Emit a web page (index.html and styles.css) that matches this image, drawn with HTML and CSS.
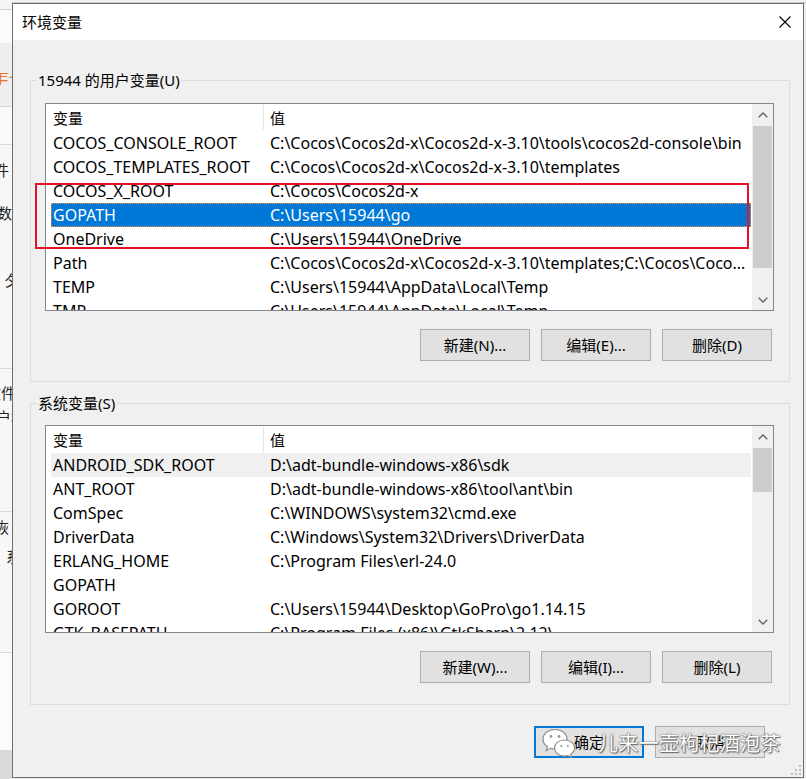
FILE: index.html
```html
<!DOCTYPE html>
<html lang="zh-CN">
<head>
<meta charset="utf-8">
<title>环境变量</title>
<link rel="stylesheet" href="styles.css">
</head>
<body>
<div class="desk">
  <div class="behind">
    <div class="bh bh-a"></div>
    <div class="bh bh-b"></div>
    <div class="bh bh-c"><span class="orange">乍一</span></div>
    <div class="bh bh-d"></div>
    <div class="bh bh-e"><span class="g g1">件</span><span class="g g2">数</span><span class="g g3">夕</span></div>
    <div class="bh bh-f"><span class="g g4">文件</span><span class="g g5">户村</span></div>
    <div class="bh bh-g"><span class="g g6">恢</span><span class="g g7">系</span></div>
    <div class="bh bh-h"></div>
    <div class="bh bh-i"></div>
  </div>

  <div class="dialog">
    <div class="titlebar">
      <span class="title">环境变量</span>
      <svg class="close" width="12" height="12" viewBox="0 0 12 12"><path d="M0.5 0.5 L11.5 11.5 M11.5 0.5 L0.5 11.5" stroke="#000" stroke-width="1.1" fill="none"/></svg>
    </div>
    <div class="body">
      <fieldset class="group g-user">
        <legend>15944 的用户变量(U)</legend>
        <div class="group-in">
          <div class="list">
            <div class="list-main">
              <div class="hdr"><span class="c1">变量</span><span class="c2">值</span></div>
              <div class="row"><span class="c1">COCOS_CONSOLE_ROOT</span><span class="c2">C:\Cocos\Cocos2d-x\Cocos2d-x-3.10\tools\cocos2d-console\bin</span></div>
              <div class="row"><span class="c1">COCOS_TEMPLATES_ROOT</span><span class="c2">C:\Cocos\Cocos2d-x\Cocos2d-x-3.10\templates</span></div>
              <div class="row"><span class="c1">COCOS_X_ROOT</span><span class="c2">C:\Cocos\Cocos2d-x</span></div>
              <div class="row selected"><span class="c1">GOPATH</span><span class="c2">C:\Users\15944\go</span></div>
              <div class="row"><span class="c1">OneDrive</span><span class="c2">C:\Users\15944\OneDrive</span></div>
              <div class="row"><span class="c1">Path</span><span class="c2">C:\Cocos\Cocos2d-x\Cocos2d-x-3.10\templates;C:\Cocos\Coco...</span></div>
              <div class="row"><span class="c1">TEMP</span><span class="c2">C:\Users\15944\AppData\Local\Temp</span></div>
              <div class="row"><span class="c1">TMP</span><span class="c2">C:\Users\15944\AppData\Local\Temp</span></div>
            </div>
            <div class="sb">
              <div class="arrow"><svg width="10" height="6" viewBox="0 0 10 6"><polyline points="0.7,5.3 5,1 9.3,5.3" stroke="#606060" stroke-width="1.3" fill="none"/></svg></div>
              <div class="track"><div class="thumb thumb-1"></div></div>
              <div class="arrow"><svg width="10" height="6" viewBox="0 0 10 6"><polyline points="0.7,0.7 5,5 9.3,0.7" stroke="#606060" stroke-width="1.3" fill="none"/></svg></div>
            </div>
          </div>
          <div class="btns">
            <button>新建(N)...</button>
            <button>编辑(E)...</button>
            <button>删除(D)</button>
          </div>
        </div>
      </fieldset>

      <fieldset class="group g-sys">
        <legend>系统变量(S)</legend>
        <div class="group-in">
          <div class="list">
            <div class="list-main">
              <div class="hdr"><span class="c1">变量</span><span class="c2">值</span></div>
              <div class="row hover"><span class="c1">ANDROID_SDK_ROOT</span><span class="c2">D:\adt-bundle-windows-x86\sdk</span></div>
              <div class="row"><span class="c1">ANT_ROOT</span><span class="c2">D:\adt-bundle-windows-x86\tool\ant\bin</span></div>
              <div class="row"><span class="c1">ComSpec</span><span class="c2">C:\WINDOWS\system32\cmd.exe</span></div>
              <div class="row"><span class="c1">DriverData</span><span class="c2">C:\Windows\System32\Drivers\DriverData</span></div>
              <div class="row"><span class="c1">ERLANG_HOME</span><span class="c2">C:\Program Files\erl-24.0</span></div>
              <div class="row"><span class="c1">GOPATH</span><span class="c2"></span></div>
              <div class="row"><span class="c1">GOROOT</span><span class="c2">C:\Users\15944\Desktop\GoPro\go1.14.15</span></div>
              <div class="row"><span class="c1">GTK_BASEPATH</span><span class="c2">C:\Program Files (x86)\GtkSharp\2.12\</span></div>
            </div>
            <div class="sb">
              <div class="arrow"><svg width="10" height="6" viewBox="0 0 10 6"><polyline points="0.7,5.3 5,1 9.3,5.3" stroke="#606060" stroke-width="1.3" fill="none"/></svg></div>
              <div class="track"><div class="thumb thumb-2"></div></div>
              <div class="arrow"><svg width="10" height="6" viewBox="0 0 10 6"><polyline points="0.7,0.7 5,5 9.3,0.7" stroke="#606060" stroke-width="1.3" fill="none"/></svg></div>
            </div>
          </div>
          <div class="btns">
            <button>新建(W)...</button>
            <button>编辑(I)...</button>
            <button>删除(L)</button>
          </div>
        </div>
      </fieldset>

      <div class="footer">
        <button class="ok">确定</button>
        <button>取消</button>
      </div>
    </div>
    <svg class="grip" width="12" height="12" viewBox="0 0 12 12">
      <rect x="9" y="1" width="2" height="2" fill="#bdbdbd"/>
      <rect x="5" y="5" width="2" height="2" fill="#bdbdbd"/>
      <rect x="9" y="5" width="2" height="2" fill="#bdbdbd"/>
      <rect x="1" y="9" width="2" height="2" fill="#bdbdbd"/>
      <rect x="5" y="9" width="2" height="2" fill="#bdbdbd"/>
      <rect x="9" y="9" width="2" height="2" fill="#bdbdbd"/>
    </svg>
  </div>
</div>

<div class="redbox"></div>

<div class="watermark">
  <svg class="wx" width="34" height="30" viewBox="0 0 34 30">
    <path d="M13 1.5 C5.8 1.5 1 6 1 11.2 C1 14.3 2.7 16.9 5.4 18.7 L4.2 22.6 L8.6 20.3 C10 20.7 11.5 21 13 21 C20.2 21 25 16.4 25 11.2 C25 6 20.2 1.5 13 1.5 Z" fill="#fff" stroke="#8e8e8e" stroke-width="1.2"/>
    <path d="M22.5 12 C16.6 12 12.5 15.7 12.5 20.1 C12.5 24.5 16.6 28.1 22.5 28.1 C23.7 28.1 24.8 27.9 25.8 27.6 L29.6 29.4 L28.6 26.2 C31.2 24.7 32.7 22.5 32.7 20.1 C32.7 15.7 28.4 12 22.5 12 Z" fill="#fff" stroke="#8e8e8e" stroke-width="1.2"/>
    <circle cx="9" cy="8.5" r="1.4" fill="#9a9a9a"/>
    <circle cx="17" cy="8.5" r="1.4" fill="#9a9a9a"/>
    <circle cx="19.3" cy="18" r="1.1" fill="#9a9a9a"/>
    <circle cx="25.8" cy="18" r="1.1" fill="#9a9a9a"/>
  </svg>
  <span class="wm-text">儿来一壶枸杞酒泡茶</span>
</div>
</body>
</html>
```

FILE: styles.css
```css
* { box-sizing: border-box; }

html, body {
  margin: 0;
  padding: 0;
}

body {
  position: relative;
  width: 806px;
  height: 779px;
  overflow: hidden;
  background: #ececec;
  font-family: "Noto Sans", "Noto Sans CJK SC", sans-serif;
  font-size: 15px;
  color: #000;
}

.desk {
  display: flex;
  align-items: flex-start;
  height: 779px;
  background: linear-gradient(#f2f2f2, #f2f2f2 2px, #c8c8c8 2px, #c8c8c8 3px, #ececec 3px);
}

/* window behind the dialog */
.behind {
  flex: none;
  width: 12px;
  height: 779px;
  display: flex;
  flex-direction: column;
  overflow: hidden;
  font-family: "Noto Sans CJK SC", sans-serif;
  font-size: 15px;
  line-height: 18px;
}
.bh { flex: none; position: relative; overflow: hidden; display: flex; flex-direction: column; }
.bh-a { height: 10px; background: #f4f4f4; border-bottom: 1px solid #d6d6d6; }
.bh-b { height: 33px; background: #fbfbfb; }
.bh-c { height: 64px; background: #efefef; padding-top: 25px; border-bottom: 1px solid #d6d6d6; }
.bh-d { height: 38px; background: #fafafa; border-bottom: 1px solid #d9d9d9; }
.bh-e { height: 224px; background: #f7f7f7; border-bottom: 1px solid #d9d9d9; }
.bh-f { height: 143px; background: #f7f7f7; border-bottom: 1px solid #d9d9d9; }
.bh-g { height: 141px; background: #f7f7f7; border-bottom: 1px solid #d9d9d9; }
.bh-h { height: 97px; background: #fbfbfb; }
.bh-i { flex: 1; background: #d9d9d9; }
.orange { color: #e2762b; margin-left: -6px; white-space: nowrap; }
.g { white-space: nowrap; color: #222; }
.g1 { margin-top: 16px; margin-left: -6px; }
.g2 { margin-top: 25px; margin-left: -3px; }
.g3 { margin-top: 49px; margin-left: 4px; }
.g4 { margin-top: 15px; margin-left: -14px; }
.g5 { margin-top: 6px; margin-left: -4px; }
.g6 { margin-top: 6px; margin-left: -6px; }
.g7 { margin-top: 11px; margin-left: 6px; }

/* dialog */
.dialog {
  flex: none;
  position: relative;
  width: 792px;
  height: 775px;
  margin-top: 3px;
  border: 1px solid #6e6e6e;
  background: #f0f0f0;
  display: flex;
  flex-direction: column;
}

.titlebar {
  flex: none;
  height: 36px;
  background: #fff;
  display: flex;
  align-items: center;
  justify-content: space-between;
  padding: 0 12px 0 9px;
}
.title {
  font-family: "Noto Sans CJK SC", sans-serif;
  font-size: 15px;
  line-height: 20px;
}
.close { display: block; }

.body {
  flex: 1;
  padding: 30px 13px 0 17px;
}

.group {
  margin: 0;
  padding: 0;
  min-width: 0;
  width: 760px;
  border: 1px solid #dcdcdc;
}
.group legend {
  margin-left: 6px;
  padding: 0 1px;
  height: 20px;
  line-height: 20px;
  font-size: 15px;
}
.group-in { padding: 13px 15px 20px 14px; }
.g-sys { margin-top: 11px; }
.g-sys .group-in { padding-top: 12px; padding-bottom: 21px; }

.list {
  height: 208px;
  border: 1px solid #828790;
  background: #fff;
  display: flex;
}
.list-main {
  flex: 1;
  min-width: 0;
  overflow: hidden;
  font-size: 16px;
}
.hdr {
  height: 27px;
  display: flex;
  align-items: stretch;
  line-height: 27px;
  font-family: "Noto Sans CJK SC", sans-serif;
  font-size: 15px;
}
.hdr .c1 {
  flex: none;
  width: 218px;
  padding-left: 7px;
  border-right: 1px solid #e5e5e5;
  margin: 1px 0 1px;
  line-height: 25px;
}
.hdr .c2 { padding-left: 6px; }

.row {
  height: 24px;
  line-height: 24px;
  margin: 0 1px 0 5px;
  display: flex;
  white-space: nowrap;
}
.row .c1 {
  flex: none;
  width: 212px;
  padding-left: 2px;
  overflow: hidden;
}
.row .c2 {
  flex: 1;
  min-width: 0;
  padding-left: 7px;
  overflow: hidden;
}
.row.selected {
  background: #0078d7;
  color: #fff;
  outline: 1px dotted #ff8a2a;
  outline-offset: -1px;
}
.row.hover { background: #f0f0f0; }

.sb {
  flex: none;
  width: 21px;
  background: #f0f0f0;
  display: flex;
  flex-direction: column;
}
.arrow {
  flex: none;
  height: 21px;
  display: flex;
  align-items: center;
  justify-content: center;
}
.arrow svg { display: block; }
.track { flex: 1; padding-top: 1px; }
.thumb { margin: 0 1px; background: #cdcdcd; }
.thumb-1 { height: 142px; }
.thumb-2 { height: 44px; }

.btns {
  display: flex;
  justify-content: flex-end;
  gap: 11px;
  margin-top: 18px;
  padding-right: 2px;
}

button {
  width: 110px;
  height: 32px;
  padding: 0;
  margin: 0;
  border: 1px solid #adadad;
  background: #e1e1e1;
  color: #000;
  font-family: "Noto Sans", "Noto Sans CJK SC", sans-serif;
  font-size: 15px;
  line-height: 20px;
}

.footer {
  display: flex;
  justify-content: flex-end;
  gap: 11px;
  margin-top: 21px;
  padding-right: 25px;
}
button.ok { border: 2px solid #0078d7; }

.grip {
  position: absolute;
  right: 1px;
  bottom: 1px;
}

/* annotation overlay */
.redbox {
  position: absolute;
  left: 35px;
  top: 183px;
  width: 714px;
  height: 66px;
  border: 2px solid #e81123;
}

/* watermark overlay */
.watermark {
  position: absolute;
  left: 542px;
  top: 728px;
  display: flex;
  align-items: center;
  pointer-events: none;
}
.wx { display: block; }
.wm-text {
  margin-left: 22px;
  font-family: "Noto Sans CJK SC", sans-serif;
  font-size: 20px;
  line-height: 28px;
  color: #fff;
  text-shadow: 0 0 1px #555, 0 0 2px #777, 1px 1px 1px #666;
  letter-spacing: 0.3px;
}
```
